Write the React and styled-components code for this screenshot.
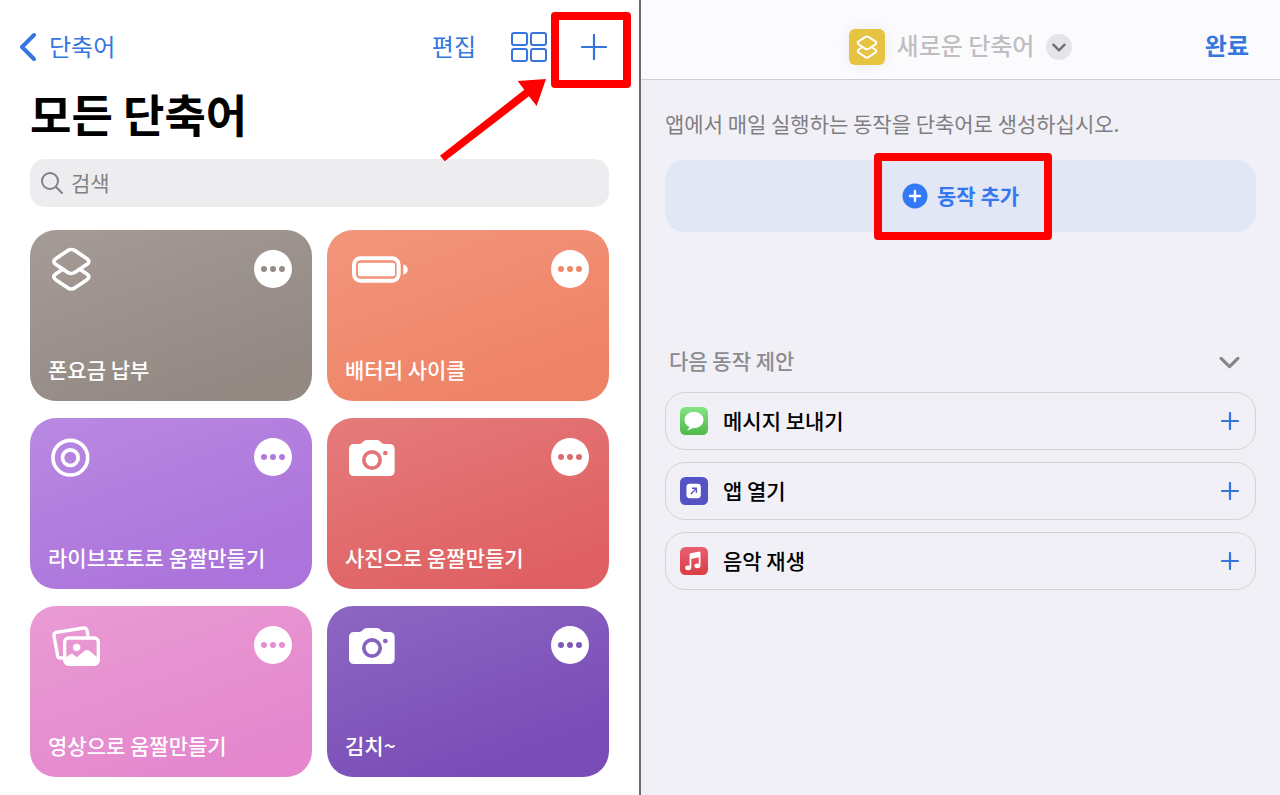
import React from "react";
import styled, { createGlobalStyle } from "styled-components";

const GlobalStyle = createGlobalStyle`
  *, *::before, *::after { box-sizing: border-box; }
  body {
    margin: 0;
    background: #f1f0f6;
    color: #000;
    font-family: "Noto Sans CJK KR", "Noto Sans", sans-serif;
    font-size: 21px;
    line-height: 30px;
  }
  button {
    margin: 0;
    padding: 0;
    border: 0;
    background: none;
    color: inherit;
    font: inherit;
    cursor: pointer;
  }
  h1, h2, h3, p, ul { margin: 0; padding: 0; font: inherit; }
  ul { list-style: none; }
  svg { display: block; flex: none; }
`;

const blue = "#3575e0";

const Page = styled.div`
  display: grid;
  grid-template-columns: 1fr 2px 1fr;
  min-height: 100vh;
`;

const Divider = styled.div`
  background: #6c6c70;
`;

const LibraryPane = styled.section`
  min-width: 0;
  padding: 0 30px 18px;
  background: #fff;
`;

const Toolbar = styled.header`
  display: flex;
  align-items: center;
  justify-content: space-between;
  height: 90px;
  padding: 4px 2px 0 0;
  margin-left: -10px;
  color: ${blue};
  font-size: 24px;
`;

const BackLink = styled.a`
  display: flex;
  align-items: center;
  gap: 12px;
  color: inherit;
  text-decoration: none;
`;

const Label = styled.span`
  padding-bottom: 3px;
`;

const ToolbarActions = styled.div`
  display: flex;
  align-items: center;
`;

const EditButton = styled.button`
  margin-right: 35px;
  padding-bottom: 3px;
`;

const AddAnchor = styled.div`
  position: relative;
  margin-left: 34px;
`;

const RedFrame = styled.span`
  position: absolute;
  top: ${(p) => p.$top};
  left: ${(p) => p.$left};
  width: ${(p) => p.$width};
  height: ${(p) => p.$height};
  border: 8px solid #fe0000;
  border-radius: 4px;
  pointer-events: none;
`;

const RedArrow = styled.svg`
  position: absolute;
  top: 45px;
  left: -141px;
  pointer-events: none;
`;

const PageTitle = styled.h1`
  font-size: 45px;
  line-height: 48px;
  font-weight: 700;
`;

const SearchField = styled.label`
  display: flex;
  align-items: center;
  gap: 7px;
  height: 48px;
  margin: 21px 0 23px;
  padding: 0 10px;
  border-radius: 15px;
  background: #ededef;
  color: #808084;
`;

const SearchInput = styled.input`
  flex: 1;
  min-width: 0;
  padding: 0 0 3px;
  border: 0;
  outline: 0;
  background: transparent;
  color: #000;
  font: inherit;
  &::placeholder { color: #808084; opacity: 1; }
`;

const CardGrid = styled.div`
  display: grid;
  grid-template-columns: 1fr 1fr;
  gap: 17px 15px;
`;

const Card = styled.article`
  display: flex;
  flex-direction: column;
  justify-content: space-between;
  min-height: 171px;
  padding: 16px 18px 17px;
  border-radius: 26px;
  background: linear-gradient(160deg, ${(p) => p.$from}, ${(p) => p.$to} 85%);
  color: #fff;
`;

const CardTop = styled.div`
  display: flex;
  align-items: flex-start;
  justify-content: space-between;
`;

const MoreButton = styled.button`
  display: flex;
  align-items: center;
  justify-content: center;
  gap: 3px;
  width: 38px;
  height: 38px;
  margin: 4px 2px 0 0;
  border-radius: 50%;
  background: #fff;
`;

const Dot = styled.span`
  width: 6px;
  height: 6px;
  border-radius: 50%;
  background: ${(p) => p.$color};
`;

const CardTitle = styled.h2`
  font-weight: 500;
`;

const EditorPane = styled.section`
  min-width: 0;
  background: #f1f0f6;
`;

const EditorHeader = styled.header`
  display: grid;
  grid-template-columns: 1fr auto 1fr;
  align-items: center;
  height: 80px;
  padding: 14px 31px 0;
  border-bottom: 1px solid #cfcfd3;
  background: #fbfbfd;
  font-size: 24px;
`;

const NameGroup = styled.div`
  grid-column: 2;
  display: flex;
  align-items: center;
  gap: 12px;
  color: #bfbfc2;
`;

const AppBadge = styled.span`
  display: grid;
  place-items: center;
  width: 36px;
  height: 36px;
  border-radius: 6px;
  background: #e6c441;
  box-shadow: 0 0 14px rgba(0, 0, 0, 0.07);
`;

const ShortcutName = styled.h2`
  padding-bottom: 3px;
  font-weight: 500;
`;

const RoundButton = styled.button`
  display: grid;
  place-items: center;
  width: 26px;
  height: 26px;
  padding-top: 2px;
  border-radius: 50%;
  background: #e5e5e7;
`;

const DoneButton = styled.button`
  justify-self: end;
  padding-bottom: 3px;
  color: ${blue};
  font-weight: 700;
`;

const EditorBody = styled.div`
  padding: 28px 24px;
`;

const Hint = styled.p`
  color: #7e7e83;
`;

const AddAction = styled.button`
  position: relative;
  display: flex;
  align-items: center;
  justify-content: center;
  gap: 9px;
  width: 100%;
  height: 72px;
  margin: 22px 0 112px;
  border-radius: 20px;
  background: #e1e7f5;
  color: #3478f0;
  font-weight: 700;
`;

const SuggestionHeader = styled.div`
  display: flex;
  align-items: center;
  justify-content: space-between;
  height: 34px;
  margin-bottom: 14px;
  padding: 0 16px 0 4px;
  color: #8b8b90;
`;

const SuggestionTitle = styled.h3`
  padding-bottom: 3px;
  font-weight: 500;
`;

const CollapseButton = styled.button`
  padding-top: 3px;
`;

const SuggestionList = styled.ul`
  display: grid;
  gap: 12px;
`;

const SuggestionRow = styled.li`
  display: flex;
  align-items: center;
  gap: 15px;
  height: 58px;
  padding: 0 16px 0 14px;
  border: 1px solid #d3d3d7;
  border-radius: 20px;
`;

const SuggestionName = styled(Label)`
  flex: 1;
  font-weight: 500;
`;

const PlusButton = styled.button`
  display: block;
  color: ${blue};
`;

const Plus = ({ size }) => (
  <svg width={size} height={size} viewBox={`0 0 ${size} ${size}`} fill="none" stroke="currentColor" strokeWidth="2.2" strokeLinecap="round" aria-hidden="true">
    <path d={`M${size / 2} 1V${size - 1}M1 ${size / 2}H${size - 1}`} />
  </svg>
);

const Chevron = ({ width, height, color, stroke }) => (
  <svg width={width} height={height} viewBox="0 0 20 12" fill="none" stroke={color} strokeWidth={stroke} strokeLinecap="round" strokeLinejoin="round" aria-hidden="true">
    <path d="M2 2l8 8 8-8" />
  </svg>
);

const LayersShape = () => (
  <g fill="none" stroke="#fff" strokeWidth="11" strokeLinecap="round" strokeLinejoin="round">
    <path d="M143 92Q154 85 165 92L201 116Q212 124 201 133L165 157Q154 164 143 157L107 133Q96 124 107 116Z" />
    <path d="M125 150L107 162Q96 170 107 179L143 203Q154 211 165 203L201 179Q212 170 201 162L183 150" />
  </g>
);

const CardGlyph = ({ viewBox, children }) => (
  <svg width="64" height="48" viewBox={viewBox} fill="#fff" aria-hidden="true">{children}</svg>
);

const LayersIcon = () => (
  <CardGlyph viewBox="84 78 192 144"><LayersShape /></CardGlyph>
);

const BatteryIcon = () => (
  <CardGlyph viewBox="76 78 192 144">
    <rect x="103" y="115" width="134" height="67" rx="19" fill="none" stroke="#fff" strokeWidth="12" />
    <rect x="115" y="128" width="111" height="41" rx="6" />
    <path d="M251 133Q264 138 264 149T251 164Z" />
  </CardGlyph>
);

const LivePhotoIcon = () => (
  <CardGlyph viewBox="84 72 192 144">
    <g fill="none" stroke="#fff" strokeWidth="11">
      <circle cx="151" cy="143" r="52" />
      <circle cx="151" cy="143" r="23.5" />
    </g>
  </CardGlyph>
);

const CameraIcon = () => (
  <CardGlyph viewBox="76 72 192 144">
    <path
      fillRule="evenodd"
      d="M104 102H119Q125 102 129 97Q134 90 142 90H172Q179 90 184 97Q188 102 194 102H209Q225 102 225 118V182Q225 198 209 198H104Q88 198 88 182V118Q88 102 104 102Z
         M127 150a30 30 0 1 0 60 0a30 30 0 1 0 -60 0Z
         M138 150a19 19 0 1 0 38 0a19 19 0 1 0 -38 0Z
         M190 129a7 7 0 1 0 14 0a7 7 0 1 0 -14 0Z"
    />
  </CardGlyph>
);

const PhotosIcon = () => (
  <CardGlyph viewBox="84 66 192 144">
    <path d="M130 174H121Q114 174 113 168L102 107Q101 99 109 97L190 84Q199 83 201 91L204 108" fill="none" stroke="#fff" strokeWidth="10" />
    <rect x="134" y="114" width="101" height="79" rx="12" fill="none" stroke="#fff" strokeWidth="10" />
    <circle cx="170" cy="142" r="11" />
    <path d="M134 175L149 164Q155 159 161 164L170 172L193 153Q201 147 209 153L235 175V192H134Z" />
  </CardGlyph>
);

const MessagesIcon = () => (
  <svg width="28" height="28" viewBox="90 232 82 82" aria-hidden="true">
    <defs>
      <linearGradient id="messages" x2="0" y2="1">
        <stop stopColor="#84e583" />
        <stop offset="1" stopColor="#50b848" />
      </linearGradient>
    </defs>
    <rect x="90" y="232" width="82" height="82" rx="16" fill="url(#messages)" />
    <ellipse cx="131" cy="270" rx="28" ry="24" fill="#fff" />
    <path d="M118 286Q119 294 111 299Q124 299 132 290Z" fill="#fff" />
  </svg>
);

const OpenAppIcon = () => (
  <svg width="28" height="28" viewBox="90 442 82 82" aria-hidden="true">
    <rect x="90" y="442" width="82" height="82" rx="16" fill="#5552c6" />
    <rect x="109" y="462" width="42" height="42" rx="9" fill="#fff" />
    <path d="M122 492L137 476M125 475H138V489" fill="none" stroke="#5552c6" strokeWidth="4" />
  </svg>
);

const MusicIcon = () => (
  <svg width="28" height="28" viewBox="90 652 82 82" aria-hidden="true">
    <defs>
      <linearGradient id="music" x2="0" y2="1">
        <stop stopColor="#e86072" />
        <stop offset="1" stopColor="#db3d44" />
      </linearGradient>
    </defs>
    <rect x="90" y="652" width="82" height="82" rx="16" fill="url(#music)" />
    <path d="M118 674Q118 671 121 670L147 665Q150 665 150 668V706H145V682L123 687V712H118Z" fill="#fff" />
    <ellipse cx="114" cy="713" rx="9" ry="7" fill="#fff" />
    <ellipse cx="141" cy="707" rx="9" ry="7" fill="#fff" />
  </svg>
);

const shortcuts = [
  { title: "폰요금 납부", Icon: LayersIcon, from: "#a59c97", to: "#938882", dot: "#968b86" },
  { title: "배터리 사이클", Icon: BatteryIcon, from: "#f3967c", to: "#ee8266", dot: "#f08768" },
  { title: "라이브포토로 움짤만들기", Icon: LivePhotoIcon, from: "#b989e2", to: "#ab73db", dot: "#b07bdd" },
  { title: "사진으로 움짤만들기", Icon: CameraIcon, from: "#e57b7c", to: "#df6062", dot: "#e06a6c" },
  { title: "영상으로 움짤만들기", Icon: PhotosIcon, from: "#e99bd4", to: "#e487cd", dot: "#e68fd0" },
  { title: "김치~", Icon: CameraIcon, from: "#8d67c3", to: "#784bb6", dot: "#8058ba" },
];

const suggestions = [
  { name: "메시지 보내기", Icon: MessagesIcon },
  { name: "앱 열기", Icon: OpenAppIcon },
  { name: "음악 재생", Icon: MusicIcon },
];

function ShortcutCard({ title, Icon, from, to, dot }) {
  return (
    <Card $from={from} $to={to}>
      <CardTop>
        <Icon />
        <MoreButton type="button" aria-label={`${title} 편집`}>
          <Dot $color={dot} />
          <Dot $color={dot} />
          <Dot $color={dot} />
        </MoreButton>
      </CardTop>
      <CardTitle>{title}</CardTitle>
    </Card>
  );
}

function Library() {
  return (
    <LibraryPane>
      <Toolbar>
        <BackLink href="#shortcuts">
          <svg width="17" height="30" viewBox="0 0 17 30" fill="none" stroke="currentColor" strokeWidth="4" strokeLinecap="round" strokeLinejoin="round" aria-hidden="true">
            <path d="M14 3L2 15l12 12" />
          </svg>
          <Label>단축어</Label>
        </BackLink>
        <ToolbarActions>
          <EditButton type="button">편집</EditButton>
          <button type="button" aria-label="격자 보기">
            <svg width="36" height="30" viewBox="302 97 108 90" fill="none" stroke="currentColor" strokeWidth="6" aria-hidden="true">
              <rect x="305" y="100" width="45" height="36" rx="6" />
              <rect x="362" y="100" width="45" height="36" rx="6" />
              <rect x="305" y="148" width="45" height="36" rx="6" />
              <rect x="362" y="148" width="45" height="36" rx="6" />
            </svg>
          </button>
          <AddAnchor>
            <PlusButton type="button" aria-label="새로운 단축어">
              <Plus size={26} />
            </PlusButton>
            <RedFrame $top="-22px" $left="-30px" $width="80px" $height="76px" />
            <RedArrow width="106" height="83" viewBox="90 237 318 249" aria-hidden="true">
              <path d="M408 237L323 243L343 269L90 467L104 484L357 289L380 318Z" fill="#fe0000" />
            </RedArrow>
          </AddAnchor>
        </ToolbarActions>
      </Toolbar>
      <PageTitle>모든 단축어</PageTitle>
      <SearchField>
        <svg width="24" height="24" viewBox="0 0 24 24" fill="none" stroke="currentColor" strokeWidth="2" strokeLinecap="round" aria-hidden="true">
          <circle cx="10" cy="10" r="8" />
          <path d="M16 16l6 6" />
        </svg>
        <SearchInput type="search" placeholder="검색" aria-label="검색" />
      </SearchField>
      <CardGrid>
        {shortcuts.map((item) => (
          <ShortcutCard key={item.title} {...item} />
        ))}
      </CardGrid>
    </LibraryPane>
  );
}

function Editor() {
  return (
    <EditorPane>
      <EditorHeader>
        <NameGroup>
          <AppBadge>
            <svg width="22" height="24" viewBox="94 80 120 135" aria-hidden="true"><LayersShape /></svg>
          </AppBadge>
          <ShortcutName>새로운 단축어</ShortcutName>
          <RoundButton type="button" aria-label="이름 옵션">
            <Chevron width={14} height={9} color="#6f6f73" stroke="3.4" />
          </RoundButton>
        </NameGroup>
        <DoneButton type="button">완료</DoneButton>
      </EditorHeader>
      <EditorBody>
        <Hint>앱에서 매일 실행하는 동작을 단축어로 생성하십시오.</Hint>
        <AddAction type="button">
          <svg width="26" height="26" viewBox="0 0 26 26" aria-hidden="true">
            <circle cx="13" cy="13" r="12.5" fill="#3478f6" />
            <path d="M13 8v10M8 13h10" stroke="#fff" strokeWidth="2.4" strokeLinecap="round" />
          </svg>
          <Label>동작 추가</Label>
          <RedFrame $top="-7px" $left="calc(50% - 87px)" $width="178px" $height="87px" />
        </AddAction>
        <SuggestionHeader>
          <SuggestionTitle>다음 동작 제안</SuggestionTitle>
          <CollapseButton type="button" aria-label="제안 접기">
            <Chevron width={21} height={13} color="#85858a" stroke="3" />
          </CollapseButton>
        </SuggestionHeader>
        <SuggestionList>
          {suggestions.map(({ name, Icon }) => (
            <SuggestionRow key={name}>
              <Icon />
              <SuggestionName>{name}</SuggestionName>
              <PlusButton type="button" aria-label={`${name} 추가`}>
                <Plus size={18} />
              </PlusButton>
            </SuggestionRow>
          ))}
        </SuggestionList>
      </EditorBody>
    </EditorPane>
  );
}

export default function App() {
  return (
    <>
      <GlobalStyle />
      <Page>
        <Library />
        <Divider />
        <Editor />
      </Page>
    </>
  );
}
